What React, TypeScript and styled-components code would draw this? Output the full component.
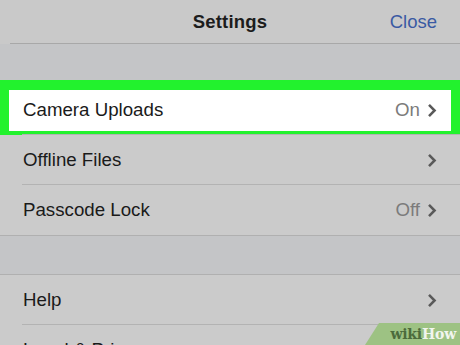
import React from "react";
import styled, { createGlobalStyle } from "styled-components";

const Global = createGlobalStyle`
  html, body { margin: 0; padding: 0; }
  body { width: 460px; height: 345px; overflow: hidden; background: #c4c5c7; font-family: "Liberation Sans", Arial, Helvetica, sans-serif; }
`;

const Screen = styled.div`
  position: relative;
  width: 460px;
  height: 345px;
  overflow: hidden;
  background: #c4c5c7;
  display: flex;
  flex-direction: column;
`;

const Header = styled.header`
  height: 44px;
  display: grid;
  grid-template-columns: 1fr auto 1fr;
  align-items: center;
  background: #c9c9c9;
  position: relative;
  flex-shrink: 0;
  &::after {
    content: "";
    position: absolute;
    left: 10px;
    right: 0;
    bottom: 0;
    height: 1px;
    background: #a8a8a8;
  }
`;

const Title = styled.div`
  grid-column: 2;
  font-size: 18.5px;
  font-weight: 700;
  color: #1c1c1c;
  letter-spacing: 0.2px;
`;

const CloseBtn = styled.div`
  grid-column: 3;
  justify-self: end;
  padding-right: 23px;
  font-size: 18.5px;
  color: #3a5aa3;
`;

const Gap = styled.div<{ h: number }>`
  height: ${(p) => p.h}px;
  flex-shrink: 0;
  background: #c4c5c7;
`;

const Group = styled.div`
  background: #cbcbcb;
  border-top: 1px solid #b0b0b0;
  border-bottom: 1px solid #b0b0b0;
  display: flex;
  flex-direction: column;
  flex-shrink: 0;
`;

const Row = styled.div<{ highlighted?: boolean; divider?: boolean }>`
  position: relative;
  height: 50px;
  box-sizing: border-box;
  display: flex;
  align-items: center;
  justify-content: space-between;
  padding: 0 23px;
  background: ${(p) => (p.highlighted ? "#ffffff" : "#cbcbcb")};
  &::after {
    content: "";
    display: ${(p) => (p.divider ? "block" : "none")};
    position: absolute;
    left: 22px;
    right: 0;
    bottom: 0;
    height: 1px;
    background: #b3b3b3;
  }
`;

const Label = styled.span`
  font-size: 18.7px;
  color: #1a1a1a;
`;

const Trail = styled.span`
  display: flex;
  align-items: center;
  gap: 7px;
`;

const Value = styled.span`
  font-size: 18.7px;
  color: #7b7b7b;
`;

const Highlight = styled.div`
  position: absolute;
  top: -5px;
  bottom: -6px;
  left: 0;
  right: 0;
  border-style: solid;
  border-color: #22f22d;
  border-width: 10px 9px 10px 9px;
  pointer-events: none;
`;

const Badge = styled.div`
  position: absolute;
  right: 0;
  bottom: 0;
  width: 95px;
  height: 22px;
  background: #9dc283;
  clip-path: polygon(14px 0, 100% 0, 100% 100%, 0 100%);
  display: flex;
  align-items: center;
  justify-content: flex-end;
  padding-right: 4px;
  box-sizing: border-box;
  font-family: "DejaVu Serif", "Liberation Serif", serif;
  font-weight: 700;
  font-size: 14px;
  letter-spacing: -0.2px;
`;

const Wiki = styled.span`
  color: #4c6b3c;
`;

const How = styled.span`
  color: #f1f5ee;
`;

const Chevron = () => (
  <svg width="10" height="15" viewBox="0 0 10 15">
    <path d="M2 1.8 L7.6 7.5 L2 13.2" fill="none" stroke="#595959" strokeWidth="2.5" strokeLinecap="butt" strokeLinejoin="miter" />
  </svg>
);

type Item = { label: string; value?: string; highlighted?: boolean };

const group1: Item[] = [
  { label: "Camera Uploads", value: "On", highlighted: true },
  { label: "Offline Files" },
  { label: "Passcode Lock", value: "Off" },
];

const group2: Item[] = [{ label: "Help" }, { label: "Legal & Privacy" }];

const renderRows = (items: Item[]) =>
  items.map((it, i) => (
    <Row key={it.label} highlighted={it.highlighted} divider={i < items.length - 1}>
      <Label>{it.label}</Label>
      <Trail>
        {it.value && <Value>{it.value}</Value>}
        <Chevron />
      </Trail>
      {it.highlighted && <Highlight />}
    </Row>
  ));

export default function App() {
  return (
    <>
      <Global />
      <Screen>
        <Header>
          <Title>Settings</Title>
          <CloseBtn>Close</CloseBtn>
        </Header>
        <Gap h={40} />
        <Group>{renderRows(group1)}</Group>
        <Gap h={38} />
        <Group>{renderRows(group2)}</Group>
        <Badge>
          <Wiki>wiki</Wiki>
          <How>How</How>
        </Badge>
      </Screen>
    </>
  );
}
